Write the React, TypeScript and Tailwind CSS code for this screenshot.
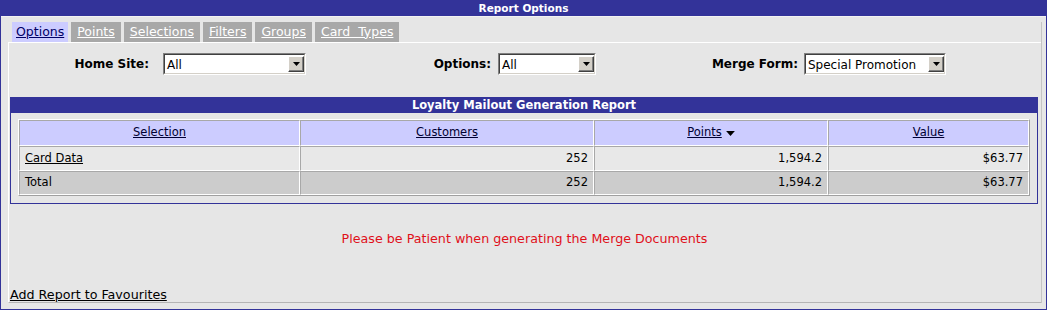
import React from "react";

const Tri = ({ className = "" }: { className?: string }) => (
  <svg width="7" height="4" viewBox="0 0 7 4" className={className}>
    <polygon points="0,0 7,0 3.5,4" fill="#000" />
  </svg>
);

function Select({ w, value }: { w: string; value: string }) {
  return (
    <div className={`${w} h-[22px] border border-t-[#808080] border-l-[#808080] border-b-white border-r-white`}>
      <div className="h-full w-full border border-t-[#404040] border-l-[#404040] border-b-[#d4d0c8] border-r-[#d4d0c8] bg-white flex items-center justify-between">
        <span className="pl-[2px] pt-[2px] text-[12px] text-black leading-none">{value}</span>
        <div className="w-[16px] h-[16px] bg-[#d4d0c8] border border-t-white border-l-white border-b-[#404040] border-r-[#404040] shadow-[inset_-1px_-1px_0_#808080] flex items-center justify-center">
          <Tri />
        </div>
      </div>
    </div>
  );
}

const tabs = ["Points", "Selections", "Filters", "Groups", "Card\u00a0\u00a0Types"];

const cellBase =
  "border border-t-[#a8a8a8] border-l-[#a8a8a8] border-b-white border-r-white flex items-center px-[5px]";

export default function App() {
  return (
    <div className="w-[1047px] h-[310px] border border-[#333399] bg-[#e6e6e6] flex flex-col font-['DejaVu_Sans',sans-serif] text-black">
      <div className="h-[16px] bg-[#333399] border-b border-[#f2f2f2] text-white font-bold text-[10.5px] leading-[15px] text-center">
        Report Options
      </div>
      <div className="flex-1 pl-[7px] pr-[4px] pt-[5px] pb-[6px] flex flex-col">
        <div className="flex-1 flex flex-col border-r border-[#c4c4c4]">
          <div className="flex h-[20px] pl-[4px] gap-[3px] text-[12.5px]">
            <div className="bg-[#ccccff] px-[4px] flex items-center">
              <span className="underline text-[#000066]">Options</span>
            </div>
            {tabs.map((t) => (
              <div key={t} className="bg-[#a8a8a8] px-[6px] flex items-center">
                <span className="underline text-white">{t}</span>
              </div>
            ))}
          </div>
          <div className="flex-1 flex flex-col border-t border-l border-white border-b border-b-[#b4b4b4] pr-[1px]">
            <div className="flex pt-[10px]">
              <div className="ml-[61px] w-[79px] text-right font-bold pt-[2px] text-[12px]">Home Site:</div>
              <div className="ml-[14px]">
                <Select w="w-[143px]" value="All" />
              </div>
              <div className="ml-[114px] w-[71px] text-right font-bold pt-[2px] text-[12px]">Options:</div>
              <div className="ml-[7px]">
                <Select w="w-[98px]" value="All" />
              </div>
              <div className="ml-[104px] w-[98px] text-right font-bold pt-[2px] text-[12px]">Merge Form:</div>
              <div className="ml-[6px]">
                <Select w="w-[142px]" value="Special Promotion" />
              </div>
            </div>

            <div className="ml-[1px] mt-[22px] w-[1028px] border border-[#333399] bg-[#e6e6e6]">
              <div className="h-[15px] bg-[#333399] text-white font-bold text-[11.5px] leading-[15px] text-center">
                Loyalty Mailout Generation Report
              </div>
              <div className="px-[7px] pt-[6px] pb-[7px]">
                <div className="border border-t-white border-l-white border-b-[#a0a0a0] border-r-[#a0a0a0] grid grid-cols-[281px_294px_234px_201px] text-[11.5px]">
                  {["Selection", "Customers", "Points", "Value"].map((h) => (
                    <div key={h} className={`${cellBase} h-[26px] bg-[#ccccff] justify-center`}>
                      <span className="underline text-[#000033]">{h}</span>
                      {h === "Points" && <Tri className="ml-[4px] w-[9px] h-[5px]" />}
                    </div>
                  ))}
                  <div className={`${cellBase} h-[25px] bg-[#e8e8e8]`}>
                    <span className="underline">Card Data</span>
                  </div>
                  <div className={`${cellBase} h-[25px] bg-[#e8e8e8] justify-end`}>252</div>
                  <div className={`${cellBase} h-[25px] bg-[#e8e8e8] justify-end`}>1,594.2</div>
                  <div className={`${cellBase} h-[25px] bg-[#e8e8e8] justify-end`}>$63.77</div>
                  <div className={`${cellBase} h-[24px] bg-[#cccccc]`}>Total</div>
                  <div className={`${cellBase} h-[24px] bg-[#cccccc] justify-end`}>252</div>
                  <div className={`${cellBase} h-[24px] bg-[#cccccc] justify-end`}>1,594.2</div>
                  <div className={`${cellBase} h-[24px] bg-[#cccccc] justify-end`}>$63.77</div>
                </div>
              </div>
            </div>

            <div className="mt-[27px] text-center text-[12.7px] leading-[15px] text-[#e0101a]">
              Please be Patient when generating the Merge Documents
            </div>

            <div className="mt-auto pl-[1px] pb-[0px] text-[12.7px] leading-[15px]">
              <span className="underline">Add Report to Favourites</span>
            </div>
          </div>
        </div>
      </div>
    </div>
  );
}
